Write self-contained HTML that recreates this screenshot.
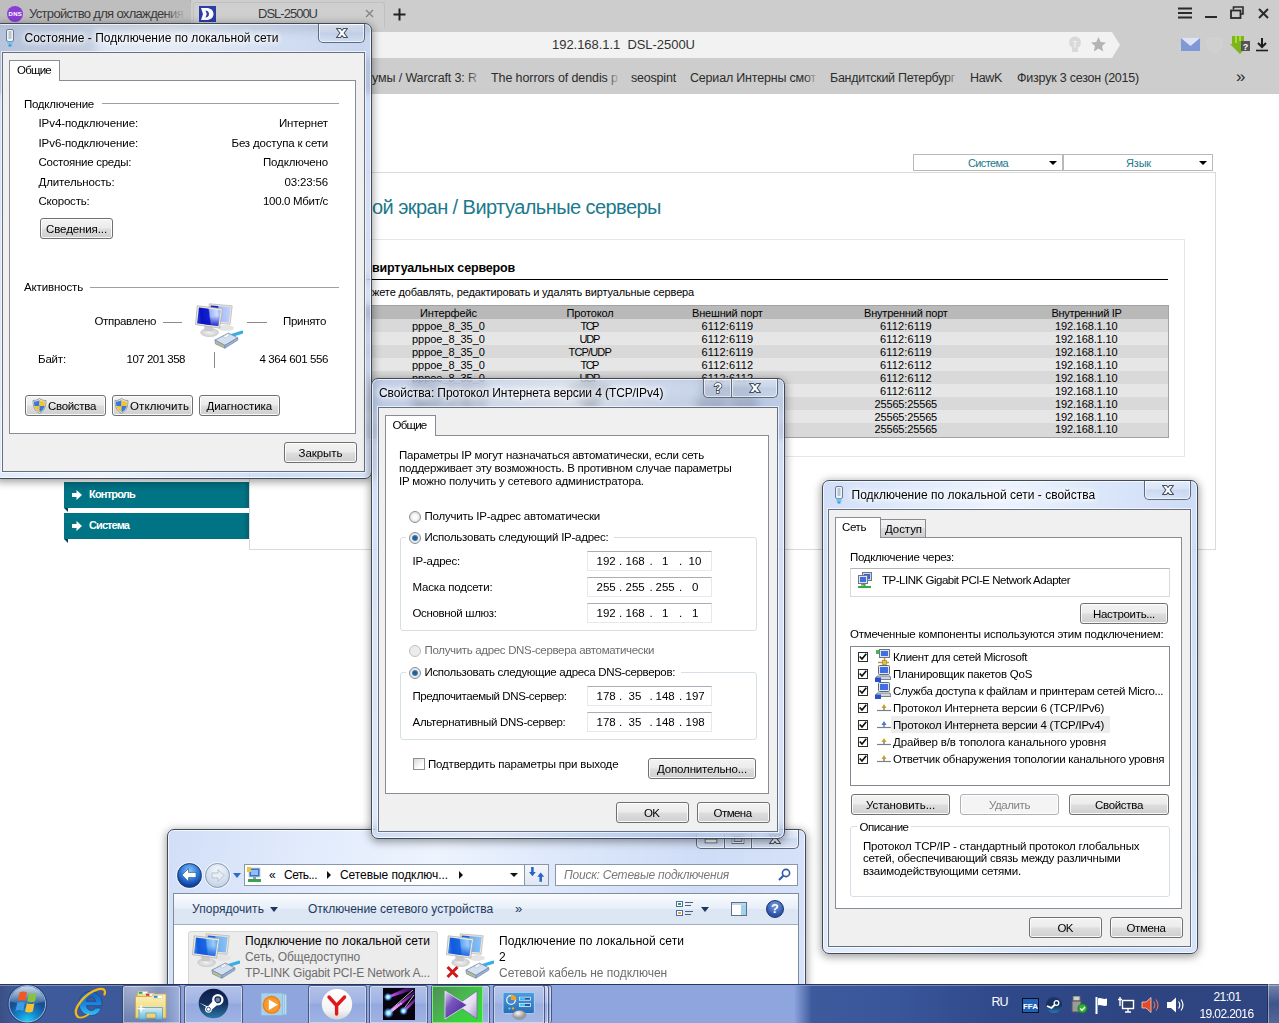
<!DOCTYPE html>
<html><head><meta charset="utf-8">
<style>
*{box-sizing:border-box;margin:0;padding:0}
html,body{width:1279px;height:1023px;overflow:hidden;background:#fff;font-family:"Liberation Sans",sans-serif;font-size:11.5px;color:#000}
.a{position:absolute}
.t{position:absolute;white-space:pre;font-size:11.5px;line-height:14px}
.s{position:absolute;white-space:pre;font-size:12px;line-height:15px}
/* browser */
#chrome{position:absolute;left:0;top:0;width:1279px;height:94px;background:#cdcdcd}
.bm{position:absolute;white-space:pre;font-size:12.5px;line-height:15px;color:#2c2c2c}
/* page */
.dd{position:absolute;top:154px;height:17px;border:1px solid #b9b9b9;background:#fff}
.dd i{position:absolute;right:5px;top:6px;border-left:4px solid transparent;border-right:4px solid transparent;border-top:4px solid #000}
.menu{position:absolute;left:64px;width:185px;height:26px;background:linear-gradient(90deg,#007385 0,#007385 97%,#04606f 100%)}
.menu:after{content:"";position:absolute;left:0;top:100%;border-top:4px solid #00424d;border-left:4px solid transparent}
.row{position:absolute;left:250px;width:918px;height:13px}
.c{position:absolute;white-space:pre;font-size:11px;line-height:13px}
/* win7 */
.win{position:absolute;border:1px solid #414b58;border-radius:7px;box-shadow:0 0 0 1px rgba(255,255,255,.7) inset,0 2px 8px 1px rgba(0,0,0,.38)}
.g1{background:linear-gradient(100deg,rgba(150,180,238,.44) 0%,rgba(180,204,246,.42) 18%,rgba(212,228,252,.42) 40%,rgba(172,198,244,.42) 60%,rgba(150,180,236,.46) 80%,rgba(165,192,242,.44) 100%);-webkit-backdrop-filter:blur(4px);backdrop-filter:blur(4px)}
.cl{position:absolute;background:#f0f0f0;border:1px solid #66717f;box-shadow:0 0 0 1px rgba(255,255,255,.65)}
.cap{position:absolute;height:19px;border:1px solid #5f6a7a;border-top:none;background:linear-gradient(rgba(255,255,255,.45),rgba(255,255,255,.15) 45%,rgba(190,204,226,.35) 50%,rgba(255,255,255,.12));box-shadow:0 0 0 1px rgba(255,255,255,.6) inset}
.cap svg{position:absolute;left:50%;top:9px;transform:translate(-50%,-50%)}
.panel{position:absolute;background:#fff;border:1px solid #898c95}
.tab{position:absolute;background:#fff;border:1px solid #898c95;border-bottom:none}
.tabi{position:absolute;background:linear-gradient(#f2f2f2,#ebebeb 50%,#dddddd 50%,#cfcfcf);border:1px solid #898c95;border-bottom:none}
.btn{position:absolute;border:1px solid #707070;border-radius:3px;background:linear-gradient(#f3f3f3,#ebebeb 48%,#dddddd 52%,#cfcfcf);box-shadow:0 0 0 1px rgba(255,255,255,.85) inset}
.btn.dis{border-color:#adb2b5;background:#f4f4f4}
.hr{position:absolute;height:1px;background:#a0a0a0}
.grp{position:absolute;border:1px solid #d5dfe5;border-radius:3px}
.ip{position:absolute;width:125px;height:20px;background:#fff;border:1px solid #e3e9ef;border-top-color:#abadb3}
.radio{position:absolute;width:12px;height:12px;border-radius:50%;border:1px solid #8e8f8f;background:radial-gradient(#fdfdfd 25%,#cfcfcf)}
.radio.on:after{content:"";position:absolute;left:2px;top:2px;width:6px;height:6px;border-radius:50%;background:radial-gradient(#2a5a8f 30%,#3e8fd0 75%,#9fd0f0)}
.radio.dis{border-color:#c0c0c0;background:#ececec}
.chk{position:absolute;width:13px;height:13px;border:1px solid #8e8f8f;background:linear-gradient(135deg,#d8d8d8,#fff 70%)}
.chk2{position:absolute;width:11px;height:11px;border:1px solid #2c2c2c;background:#fff}
/* taskbar */
#task{position:absolute;left:0;top:984px;width:1279px;height:39px;background:linear-gradient(90deg,#3b4f84 0%,#405b9b 1.2%,#3d5999 8%,#3b5697 13%,#3c5a9c 63.5%,#39569a 70%,#30498a 78%,#2d4480 90%,#2f4682 100%);border-top:1px solid #26345e;box-shadow:0 1px 0 rgba(255,255,255,.32) inset}
.tb{position:absolute;top:985px;height:38px;border:1px solid rgba(30,40,80,.65);border-bottom:none;border-radius:3px 3px 0 0;background:linear-gradient(rgba(255,255,255,.32),rgba(255,255,255,.16) 45%,rgba(255,255,255,.05) 50%,rgba(255,255,255,.16));box-shadow:0 0 0 1px rgba(255,255,255,.42) inset}
</style></head><body>
<!-- ===== BROWSER ===== -->
<div id="chrome"></div>
<div class="a" style="left:0;top:0;width:191px;height:27px;background:#bebebe;border-right:1px solid #acacac"></div>
<div class="a" style="left:193px;top:2px;width:192px;height:26px;background:#cfcfcf;border:1px solid #c0c0c0;border-bottom:none;border-radius:3px 3px 0 0"></div>
<div class="a" style="left:7px;top:6px;width:16px;height:16px;border-radius:50%;background:#8a3fd6"></div>
<div class="a" style="left:8.5px;top:11px;font-size:6px;line-height:6px;font-weight:bold;color:#fff;letter-spacing:.3px">DNS</div>
<div class="s" style="font-size: 13px; color: rgb(58, 58, 58); top: 6px; letter-spacing: -0.67px; left: 29px;">Устройство для охлаждения</div>
<div class="a" style="left:165px;top:2px;width:26px;height:24px;background:linear-gradient(90deg,rgba(190,190,190,0),#bebebe 80%)"></div>
<svg class="a" style="left:199px;top:6px" width="17" height="16" viewBox="0 0 17 16"><rect width="17" height="16" fill="#2b3ea8"></rect><path d="M2 2h5.5c4 0 7 2.3 7 6s-3 6-7 6H2l2-6z" fill="#fff"></path><path d="M6.5 4.5c2 0 3.5 1.3 3.5 3.5s-1.5 3.5-3.5 3.5L7.8 8z" fill="#2b3ea8"></path></svg>
<div class="s" style="font-size: 13px; color: rgb(58, 58, 58); top: 6px; letter-spacing: -0.99px; left: 258px;">DSL-2500U</div>
<svg class="a" style="left:365px;top:9px" width="9" height="9" viewBox="0 0 9 9"><path d="M1 1l7 7M8 1l-7 7" stroke="#858585" stroke-width="1.4"></path></svg>
<svg class="a" style="left:393px;top:8px" width="13" height="13" viewBox="0 0 13 13"><path d="M6.5 0.5v12M0.5 6.5h12" stroke="#222" stroke-width="2"></path></svg>
<!-- window controls -->
<svg class="a" style="left:1178px;top:7px" width="14" height="12" viewBox="0 0 14 12"><path d="M0 1.5h14M0 6h14M0 10.5h14" stroke="#2a2a2a" stroke-width="2"></path></svg>
<div class="a" style="left:1205px;top:16px;width:12px;height:2px;background:#2a2a2a"></div>
<svg class="a" style="left:1230px;top:6px" width="14" height="13" viewBox="0 0 14 13"><path d="M3.5 3.5V1h9.5v7H11" fill="none" stroke="#2a2a2a" stroke-width="1.6"></path><rect x="1" y="4.5" width="9.5" height="7.5" fill="none" stroke="#2a2a2a" stroke-width="1.8"></rect></svg>
<svg class="a" style="left:1258px;top:8px" width="11" height="11" viewBox="0 0 11 11"><path d="M1 1l9 9M10 1l-9 9" stroke="#2a2a2a" stroke-width="2"></path></svg>
<!-- address bar -->
<div class="a" style="left:96px;top:32px;width:1016px;height:26px;background:#f2f2f2"></div>
<div class="a" style="left:1112px;top:32px;width:0;height:0;border-top:13px solid transparent;border-bottom:13px solid transparent;border-left:8px solid #f2f2f2"></div>
<div class="s" style="font-size: 13px; color: rgb(51, 51, 51); top: 37px; letter-spacing: -0.04px; left: 552px;">192.168.1.1  DSL-2500U</div>
<svg class="a" style="left:1068px;top:36px" width="14" height="18" viewBox="0 0 14 18"><circle cx="7" cy="6.5" r="6" fill="#d9d9d9"></circle><rect x="4" y="12" width="6" height="4" fill="#d9d9d9"></rect><path d="M5 5.5h4M7 5.5v6" stroke="#f2f2f2" stroke-width="1.2"></path></svg>
<svg class="a" style="left:1091px;top:37px" width="15" height="15" viewBox="0 0 15 15"><path d="M7.5 0l2.2 5 5.3.5-4 3.6 1.2 5.4-4.7-2.9-4.7 2.9 1.2-5.4-4-3.6 5.3-.5z" fill="#b4b4b4"></path></svg>
<!-- right icons -->
<svg class="a" style="left:1181px;top:38px" width="19" height="13" viewBox="0 0 19 13"><rect width="19" height="13" fill="#8099d6"></rect><path d="M0 0l9.5 8L19 0z" fill="#dde4f6"></path></svg>
<svg class="a" style="left:1206px;top:37px" width="17" height="17" viewBox="0 0 17 17"><path d="M1 2c3 0 5-1 7.5-2C11 1 13 2 16 2c0 7-2 12-7.5 15C3 14 1 9 1 2z" fill="#d0d0d0" stroke="#d4d4d4"></path></svg>
<svg class="a" style="left:1229px;top:36px" width="22" height="19" viewBox="0 0 22 19"><path d="M3 0h12v8h5l-9 10-10-10h2z" fill="#7eb51a"></path><path d="M6 0h2v7H6zM10 0h2v5h-2z" fill="#a8dc3c"></path><rect x="12" y="5" width="9" height="10" fill="#555"></rect><text x="16.5" y="13.5" font-size="9" font-weight="bold" fill="#fff" text-anchor="middle" font-family="Liberation Sans">?</text></svg>
<svg class="a" style="left:1256px;top:38px" width="12" height="14" viewBox="0 0 12 14"><path d="M6 0v8M2 5l4 4 4-4" fill="none" stroke="#1d1d1d" stroke-width="2"></path><path d="M0 12.5h12" stroke="#1d1d1d" stroke-width="1.6"></path></svg>
<!-- bookmarks -->
<div class="bm" style="top: 71px; letter-spacing: -0.12px; left: 372px;">умы / Warcraft 3: R</div>
<div class="bm" style="top: 71px; letter-spacing: -0.1px; left: 491px;">The horrors of dendis p</div>
<div class="bm" style="top: 71px; letter-spacing: -0.2px; left: 631px;">seospint</div>
<div class="bm" style="top: 71px; letter-spacing: -0.19px; left: 690px;">Сериал Интерны смот</div>
<div class="bm" style="top: 71px; letter-spacing: -0.28px; left: 830px;">Бандитский Петербург</div>
<div class="bm" style="top: 71px; letter-spacing: -0.34px; left: 970px;">HawK</div>
<div class="bm" style="top: 71px; letter-spacing: -0.22px; left: 1017px;">Физрук 3 сезон (2015)</div>
<div class="a" style="left:467px;top:68px;width:12px;height:22px;background:linear-gradient(90deg,rgba(205,205,205,0),rgba(205,205,205,.8))"></div>
<div class="a" style="left:607px;top:68px;width:12px;height:22px;background:linear-gradient(90deg,rgba(205,205,205,0),rgba(205,205,205,.9))"></div>
<div class="a" style="left:805px;top:68px;width:12px;height:22px;background:linear-gradient(90deg,rgba(205,205,205,0),rgba(205,205,205,.9))"></div>
<div class="a" style="left:945px;top:68px;width:12px;height:22px;background:linear-gradient(90deg,rgba(205,205,205,0),rgba(205,205,205,.8))"></div>
<div class="bm" style="font-size: 17px; line-height: 18px; top: 68px; letter-spacing: -0.47px; left: 1236px;">»</div>

<!-- ===== PAGE ===== -->
<div class="a" style="left:249px;top:172px;width:967px;height:378px;border:1px solid #dadada"></div>
<div class="a" style="left:249px;top:239px;width:936px;height:218px;border:1px solid #e6e6e6"></div>
<div class="dd" style="left:913px;width:150px"><i></i></div>
<div class="dd" style="left:1063px;width:150px"><i></i></div>
<div class="c" style="color: rgb(27, 122, 141); top: 157px; letter-spacing: -0.62px; left: 968px;">Система</div>
<div class="c" style="color: rgb(27, 122, 141); top: 157px; letter-spacing: -0.18px; left: 1126px;">Язык</div>
<div class="a" style="white-space: pre; font-size: 20px; line-height: 24px; color: rgb(27, 122, 141); top: 195px; letter-spacing: -0.56px; left: 372px;">ой экран / Виртуальные серверы</div>
<div class="a" style="white-space: pre; font-size: 12.5px; line-height: 15px; font-weight: bold; top: 261px; letter-spacing: -0.16px; left: 372px;">виртуальных серверов</div>
<div class="a" style="left:250px;top:279px;width:918px;height:1px;background:#000"></div>
<div class="c" style="top: 286px; letter-spacing: -0.13px; left: 372px;">жете добавлять, редактировать и удалять виртуальные сервера</div>
<!-- table -->
<div class="a" style="left:250px;top:305px;width:919px;height:133px;border:1px solid #a3a3a3;background:#d9d9d9"></div>
<div class="row" style="top:306px;background:#b9b9b9"></div>
<div class="row" style="top:332px;background:#e6e6e6"></div>
<div class="row" style="top:358px;background:#e6e6e6"></div>
<div class="row" style="top:384px;background:#e6e6e6"></div>
<div class="row" style="top:410px;background:#e6e6e6"></div>
<div class="c" style="top: 307px; letter-spacing: -0.11px; left: 420px;">Интерфейс</div>
<div class="c" style="top: 307px; letter-spacing: -0.15px; left: 566.5px;">Протокол</div>
<div class="c" style="top: 307px; letter-spacing: -0.17px; left: 692px;">Внешний порт</div>
<div class="c" style="top: 307px; letter-spacing: -0.2px; left: 864px;">Внутренний порт</div>
<div class="c" style="top: 307px; letter-spacing: -0.31px; left: 1051.5px;">Внутренний IP</div>
<div class="c" style="top: 320px; letter-spacing: -0.05px; left: 412px;">pppoe_8_35_0</div>
<div class="c" style="top: 320px; letter-spacing: -1.53px; left: 580.5px;">TCP</div>
<div class="c" style="top: 320px; letter-spacing: 0.15px; left: 701.5px;">6112:6119</div>
<div class="c" style="top: 320px; letter-spacing: 0.15px; left: 880px;">6112:6119</div>
<div class="c" style="top: 320px; letter-spacing: -0.15px; left: 1055px;">192.168.1.10</div>
<div class="c" style="top: 333px; letter-spacing: -0.05px; left: 412px;">pppoe_8_35_0</div>
<div class="c" style="top: 333px; letter-spacing: -1.18px; left: 579.5px;">UDP</div>
<div class="c" style="top: 333px; letter-spacing: 0.15px; left: 701.5px;">6112:6119</div>
<div class="c" style="top: 333px; letter-spacing: 0.15px; left: 880px;">6112:6119</div>
<div class="c" style="top: 333px; letter-spacing: -0.15px; left: 1055px;">192.168.1.10</div>
<div class="c" style="top: 346px; letter-spacing: -0.05px; left: 412px;">pppoe_8_35_0</div>
<div class="c" style="top: 346px; letter-spacing: -0.84px; left: 568.5px;">TCP/UDP</div>
<div class="c" style="top: 346px; letter-spacing: 0.15px; left: 701.5px;">6112:6119</div>
<div class="c" style="top: 346px; letter-spacing: 0.15px; left: 880px;">6112:6119</div>
<div class="c" style="top: 346px; letter-spacing: -0.15px; left: 1055px;">192.168.1.10</div>
<div class="c" style="top: 359px; letter-spacing: -0.05px; left: 412px;">pppoe_8_35_0</div>
<div class="c" style="top: 359px; letter-spacing: -1.53px; left: 580.5px;">TCP</div>
<div class="c" style="top: 359px; letter-spacing: 0.15px; left: 701.5px;">6112:6112</div>
<div class="c" style="top: 359px; letter-spacing: 0.15px; left: 880px;">6112:6112</div>
<div class="c" style="top: 359px; letter-spacing: -0.15px; left: 1055px;">192.168.1.10</div>
<div class="c" style="top: 372px; letter-spacing: -0.05px; left: 412px;">pppoe_8_35_0</div>
<div class="c" style="top: 372px; letter-spacing: -1.18px; left: 579.5px;">UDP</div>
<div class="c" style="top: 372px; letter-spacing: 0.15px; left: 701.5px;">6112:6112</div>
<div class="c" style="top: 372px; letter-spacing: 0.15px; left: 880px;">6112:6112</div>
<div class="c" style="top: 372px; letter-spacing: -0.15px; left: 1055px;">192.168.1.10</div>
<div class="c" style="top: 385px; letter-spacing: -0.05px; left: 412px;">pppoe_8_35_0</div>
<div class="c" style="top: 385px; letter-spacing: -0.84px; left: 568.5px;">TCP/UDP</div>
<div class="c" style="top: 385px; letter-spacing: 0.15px; left: 701.5px;">6112:6112</div>
<div class="c" style="top: 385px; letter-spacing: 0.15px; left: 880px;">6112:6112</div>
<div class="c" style="top: 385px; letter-spacing: -0.15px; left: 1055px;">192.168.1.10</div>
<div class="c" style="top: 398px; letter-spacing: -0.05px; left: 412px;">pppoe_8_35_0</div>
<div class="c" style="top: 398px; letter-spacing: -1.53px; left: 580.5px;">TCP</div>
<div class="c" style="top: 398px; letter-spacing: -0.15px; left: 696px;">25565:25565</div>
<div class="c" style="top: 398px; letter-spacing: -0.15px; left: 874.5px;">25565:25565</div>
<div class="c" style="top: 398px; letter-spacing: -0.15px; left: 1055px;">192.168.1.10</div>
<div class="c" style="top: 411px; letter-spacing: -0.05px; left: 412px;">pppoe_8_35_0</div>
<div class="c" style="top: 411px; letter-spacing: -1.18px; left: 579.5px;">UDP</div>
<div class="c" style="top: 411px; letter-spacing: -0.15px; left: 696px;">25565:25565</div>
<div class="c" style="top: 411px; letter-spacing: -0.15px; left: 874.5px;">25565:25565</div>
<div class="c" style="top: 411px; letter-spacing: -0.15px; left: 1055px;">192.168.1.10</div>
<div class="c" style="top: 423px; letter-spacing: -0.05px; left: 412px;">pppoe_8_35_0</div>
<div class="c" style="top: 423px; letter-spacing: -0.84px; left: 568.5px;">TCP/UDP</div>
<div class="c" style="top: 423px; letter-spacing: -0.15px; left: 696px;">25565:25565</div>
<div class="c" style="top: 423px; letter-spacing: -0.15px; left: 874.5px;">25565:25565</div>
<div class="c" style="top: 423px; letter-spacing: -0.15px; left: 1055px;">192.168.1.10</div>

<!-- menu -->
<div class="menu" style="top:482px;height:26px"></div>
<div class="menu" style="top:513px"></div>
<svg class="a" style="left:72px;top:490px" width="10" height="10" viewBox="0 0 10 10"><path d="M0 3h4.5V0L10 5 4.5 10V7H0z" fill="#fff"></path></svg>
<svg class="a" style="left:72px;top:521px" width="10" height="10" viewBox="0 0 10 10"><path d="M0 3h4.5V0L10 5 4.5 10V7H0z" fill="#fff"></path></svg>
<div class="c" style="color: rgb(255, 255, 255); font-weight: bold; top: 488px; letter-spacing: -0.8px; left: 89px;">Контроль</div>
<div class="c" style="color: rgb(255, 255, 255); font-weight: bold; top: 519px; letter-spacing: -0.9px; left: 89px;">Система</div>
<!-- ===== WIN4 explorer (behind) ===== -->
<div class="win g1" style="left:167px;top:829px;width:639px;height:220px"></div>
<div class="cap" style="left:696px;top:830px;width:29px;border-radius:0 0 0 5px;height:19px"><svg style="top:11px" width="13" height="5" viewBox="0 0 13 5"><rect x=".5" y=".5" width="12" height="4" fill="#f9fbfe" stroke="#46505f"></rect></svg></div>
<div class="cap" style="left:724px;top:830px;width:28px;height:19px"><svg style="top:9px" width="13" height="10" viewBox="0 0 13 10"><rect x="1.500" y="1.500" width="10" height="7" fill="none" stroke="#46505f" stroke-width="3"></rect><rect x="1.500" y="1.500" width="10" height="7" fill="none" stroke="#f9fbfe" stroke-width="1.400"></rect></svg></div>
<div class="cap" style="left:751px;top:830px;width:48px;border-radius:0 0 5px 0;height:19px"><svg width="13" height="11" viewBox="0 0 13 11"><path d="M1 1h4L6.500 3 8 1h4L8.600 5.500 12 10H8L6.500 8 5 10H1l3.400-4.500z" fill="#f9fbfe" stroke="#46505f" stroke-width="1.100" stroke-linejoin="round"></path></svg></div>
<!-- nav buttons -->
<div class="a" style="left:177px;top:863px;width:25px;height:25px;border-radius:50%;background:radial-gradient(circle at 50% 30%,#8fc4f4 0,#2d79d6 45%,#0f3f9e 75%,#1c55b8 100%);border:1px solid #1a3a78;box-shadow:0 0 0 1px rgba(255,255,255,.6)"></div>
<svg class="a" style="left:181px;top:868px" width="16" height="14" viewBox="0 0 16 14"><path d="M7.5 0.5L1 7l6.5 6.5v-4H15v-5H7.5z" fill="#fff" stroke="#24508f" stroke-width=".6"></path></svg>
<div class="a" style="left:205px;top:863px;width:25px;height:25px;border-radius:50%;background:radial-gradient(circle at 50% 30%,#f4f8fc 0,#d4dfee 55%,#b9c8de 100%);border:1px solid #8a99b3;box-shadow:0 0 0 1px rgba(255,255,255,.6)"></div>
<svg class="a" style="left:211px;top:869px" width="14" height="13" viewBox="0 0 14 13"><path d="M7 0.5L13 6.5 7 12.5V9H1V4h6z" fill="#e9eef6" stroke="#a9b6cb" stroke-width=".8"></path></svg>
<div class="a" style="left:233px;top:873px;border-left:4px solid transparent;border-right:4px solid transparent;border-top:5px solid #2e6ccc"></div>
<!-- address -->
<div class="a" style="left:244px;top:864px;width:281px;height:22px;background:#fff;border:1px solid #8a97a8"></div>
<div class="a" style="left:524px;top:864px;width:25px;height:22px;background:linear-gradient(#f4f7fb,#dfe7f2);border:1px solid #8a97a8"></div>
<svg class="a" style="left:247px;top:867px" width="16" height="16" viewBox="0 0 16 16"><rect x="2" y="1" width="11" height="9" fill="#3b6fd0" stroke="#c9d3e0"></rect><rect x="4" y="3" width="7" height="5" fill="#8ec0f5"></rect><rect x="6" y="10" width="3" height="2" fill="#999"></rect><rect x="1" y="12" width="13" height="3" fill="#3aa44a"></rect><rect x="0" y="0" width="4" height="5" fill="#e8c93a"></rect></svg>
<div class="s" style="font-size: 12px; top: 868px; letter-spacing: 4.31px; left: 269px;">«</div>
<div class="s" style="top: 868px; letter-spacing: -0.53px; left: 284px;">Сеть...</div>
<div class="a" style="left:327px;top:871px;border-top:4px solid transparent;border-bottom:4px solid transparent;border-left:4px solid #111"></div>
<div class="s" style="top: 868px; letter-spacing: -0.07px; left: 340px;">Сетевые подключ...</div>
<div class="a" style="left:459px;top:871px;border-top:4px solid transparent;border-bottom:4px solid transparent;border-left:4px solid #111"></div>
<div class="a" style="left:510px;top:873px;border-left:4px solid transparent;border-right:4px solid transparent;border-top:4px solid #111"></div>
<svg class="a" style="left:529px;top:867px" width="15" height="16" viewBox="0 0 15 16"><path d="M5.500 1v6H8L4 12 0 7h2.500V1z" fill="#2a62c8" transform="translate(0 -1) scale(.85)"></path><path d="M10.500 15V9H8l4-5 4 5h-2.500v6z" fill="#2a62c8" transform="translate(1.500 2) scale(.85)"></path></svg>
<!-- search -->
<div class="a" style="left:555px;top:864px;width:243px;height:22px;background:#fff;border:1px solid #8a97a8"></div>
<div class="s" style="font-style: italic; color: rgb(122, 122, 122); top: 868px; letter-spacing: -0.22px; left: 564px;">Поиск: Сетевые подключения</div>
<svg class="a" style="left:778px;top:868px" width="13" height="13" viewBox="0 0 13 13"><circle cx="8" cy="5" r="3.6" fill="none" stroke="#2b5aa8" stroke-width="1.6"></circle><path d="M5.3 7.7L1 12" stroke="#2b5aa8" stroke-width="2"></path></svg>
<!-- toolbar -->
<div class="a" style="left:173px;top:893px;width:626px;height:160px;background:#fff;border:1px solid #7f8c9c"></div>
<div class="a" style="left:174px;top:894px;width:624px;height:31px;background:linear-gradient(#fafcfe,#e6eef8 50%,#dce6f4 50%,#dde7f4);border-bottom:1px solid #a0afc3"></div>
<div class="s" style="color: rgb(30, 57, 91); top: 902px; letter-spacing: 0.05px; left: 192px;">Упорядочить</div>
<div class="a" style="left:270px;top:907px;border-left:4px solid transparent;border-right:4px solid transparent;border-top:5px solid #1e395b"></div>
<div class="s" style="color: rgb(30, 57, 91); top: 902px; letter-spacing: -0.01px; left: 308px;">Отключение сетевого устройства</div>
<div class="s" style="color: rgb(30, 57, 91); font-size: 13px; top: 901px; letter-spacing: 0.77px; left: 515px;">»</div>
<svg class="a" style="left:676px;top:901px" width="17" height="16" viewBox="0 0 17 16"><rect x="0.5" y="0.5" width="6" height="5" fill="#fff" stroke="#4a6ea0"></rect><rect x="0.5" y="9.5" width="6" height="5" fill="#fff" stroke="#4a6ea0"></rect><rect x="2" y="2" width="3" height="2" fill="#3aa44a"></rect><rect x="2" y="11" width="3" height="2" fill="#e8a03a"></rect><path d="M9 1.5h8M9 4.5h6M9 10.5h8M9 13.5h6" stroke="#4a6080" stroke-width="1.2"></path></svg>
<div class="a" style="left:701px;top:907px;border-left:4px solid transparent;border-right:4px solid transparent;border-top:5px solid #1e395b"></div>
<svg class="a" style="left:731px;top:901px" width="16" height="16" viewBox="0 0 16 16"><rect x="0.5" y="1.5" width="15" height="13" fill="#fff" stroke="#5a7190"></rect><rect x="10" y="3" width="5" height="11" fill="#9fd3ea"></rect><rect x="1" y="2" width="14" height="2" fill="#c5d3e4"></rect></svg>
<div class="a" style="left:766px;top:900px;width:18px;height:18px;border-radius:50%;background:radial-gradient(circle at 50% 30%,#7ea3e0,#2a4fa8 70%);border:1px solid #1c3370"></div>
<div class="a" style="left:771px;top:902px;font-size:13px;font-weight:bold;color:#fff;line-height:14px">?</div>
<!-- items -->
<div class="a" style="left:188px;top:931px;width:250px;height:56px;background:#ececec;border:1px solid #d6d6d6;border-radius:3px"></div>
<svg class="a" style="left:192px;top:933px" width="48" height="46" viewBox="0 0 48 46">
<defs><linearGradient id="sc192_933" x1="0" y1=".1" x2="1" y2="0"><stop offset="0" stop-color="#2f7fec"></stop><stop offset=".12" stop-color="#1258dc"></stop><stop offset=".46" stop-color="#1c68e4"></stop><stop offset=".52" stop-color="#5fa6f2"></stop><stop offset=".8" stop-color="#9cccfa"></stop><stop offset="1" stop-color="#4f98ee"></stop></linearGradient>
<linearGradient id="sb192_933" x1="0" y1=".1" x2="1" y2="0"><stop offset="0" stop-color="#1258dc"></stop><stop offset=".38" stop-color="#1f6ae4"></stop><stop offset=".44" stop-color="#6cb0f4"></stop><stop offset="1" stop-color="#8cc4f8"></stop></linearGradient>
<linearGradient id="sd192_933" x1="0" y1="0" x2=".15" y2="1"><stop offset=".55" stop-color="#1258dc" stop-opacity="0"></stop><stop offset="1" stop-color="#1258dc" stop-opacity=".75"></stop></linearGradient><radialGradient id="st192_933"><stop offset="0" stop-color="#f2f2f2"></stop><stop offset="1" stop-color="#cfcfcf"></stop></radialGradient></defs>
<ellipse cx="31" cy="25" rx="8" ry="3" fill="#e4e4e4"></ellipse>
<path d="M14.300 .8l22.900 2-2.100 18.500-22.100-1.800z" fill="#e9e7df" stroke="#b4b2a8" stroke-width=".7"></path>
<path d="M15.800 2.400l19.800 1.700-1.800 15.500-19.200-1.600z" fill="url(#sb192_933)"></path>
<ellipse cx="14.600" cy="29.500" rx="9" ry="4.200" fill="url(#st192_933)" stroke="#c4c4c4" stroke-width=".5"></ellipse>
<path d="M9.500 23l8 1 .3 4.500-8.800-.8z" fill="#c9c9c9"></path>
<path d="M2.300 2.800l25.200 3-2.900 19.300L.5 21.600z" fill="#ecebe4" stroke="#a9a79d" stroke-width=".7"></path>
<path d="M3.900 4.600l21.900 2.600-2.500 16L2.200 20.200z" fill="url(#sc192_933)"></path><path d="M3.900 4.600l21.900 2.600-2.500 16L2.200 20.200z" fill="url(#sd192_933)"></path>
<path d="M36.500 32.600l10.400-3.400" stroke="#36aee8" stroke-width="3.200" stroke-linecap="round"></path>
<path d="M19.900 37.100l13.500-7 9.400 4.700-12.900 7.600z" fill="#d3e0f0" stroke="#6f86a6" stroke-width=".8"></path>
<path d="M19.900 37.100l10 5.300v2.800l-9.400-4.300z" fill="#a9bdd8" stroke="#6f86a6" stroke-width=".7"></path>
<path d="M29.900 42.400l12.900-7.600v2.300l-12.900 8.100z" fill="#9ab2d2" stroke="#6f86a6" stroke-width=".7"></path>
<path d="M28 33.800l4.500-3 2.500 1.300-4.500 3z" fill="#f4f8fc" stroke="#9fb2cc" stroke-width=".5"></path>
<path d="M22.300 39.300v2M24 40.200v2M25.700 41.100v2M27.400 42v2" stroke="#d8b82a" stroke-width="1"></path>
</svg>
<div class="s" style="top: 934px; letter-spacing: 0.07px; left: 245px;">Подключение по локальной сети</div>
<div class="s" style="color: rgb(109, 109, 109); top: 950px; letter-spacing: -0.1px; left: 245px;">Сеть, Общедоступно</div>
<div class="s" style="color: rgb(109, 109, 109); top: 966px; letter-spacing: -0.17px; left: 245px;">TP-LINK Gigabit PCI-E Network A...</div>
<svg class="a" style="left:446px;top:933px" width="48" height="46" viewBox="0 0 48 46">
<defs><linearGradient id="sc446_933" x1="0" y1=".1" x2="1" y2="0"><stop offset="0" stop-color="#2f7fec"></stop><stop offset=".12" stop-color="#1258dc"></stop><stop offset=".46" stop-color="#1c68e4"></stop><stop offset=".52" stop-color="#5fa6f2"></stop><stop offset=".8" stop-color="#9cccfa"></stop><stop offset="1" stop-color="#4f98ee"></stop></linearGradient>
<linearGradient id="sb446_933" x1="0" y1=".1" x2="1" y2="0"><stop offset="0" stop-color="#1258dc"></stop><stop offset=".38" stop-color="#1f6ae4"></stop><stop offset=".44" stop-color="#6cb0f4"></stop><stop offset="1" stop-color="#8cc4f8"></stop></linearGradient>
<linearGradient id="sd446_933" x1="0" y1="0" x2=".15" y2="1"><stop offset=".55" stop-color="#1258dc" stop-opacity="0"></stop><stop offset="1" stop-color="#1258dc" stop-opacity=".75"></stop></linearGradient><radialGradient id="st446_933"><stop offset="0" stop-color="#f2f2f2"></stop><stop offset="1" stop-color="#cfcfcf"></stop></radialGradient></defs>
<ellipse cx="31" cy="25" rx="8" ry="3" fill="#e4e4e4"></ellipse>
<path d="M14.300 .8l22.900 2-2.100 18.500-22.100-1.800z" fill="#e9e7df" stroke="#b4b2a8" stroke-width=".7"></path>
<path d="M15.800 2.400l19.800 1.700-1.800 15.500-19.200-1.600z" fill="url(#sb446_933)"></path>
<ellipse cx="14.600" cy="29.500" rx="9" ry="4.200" fill="url(#st446_933)" stroke="#c4c4c4" stroke-width=".5"></ellipse>
<path d="M9.500 23l8 1 .3 4.500-8.800-.8z" fill="#c9c9c9"></path>
<path d="M2.300 2.800l25.200 3-2.900 19.300L.5 21.600z" fill="#ecebe4" stroke="#a9a79d" stroke-width=".7"></path>
<path d="M3.900 4.600l21.900 2.600-2.500 16L2.200 20.200z" fill="url(#sc446_933)"></path><path d="M3.900 4.600l21.900 2.600-2.500 16L2.200 20.200z" fill="url(#sd446_933)"></path>
<path d="M36.500 32.600l10.400-3.400" stroke="#36aee8" stroke-width="3.200" stroke-linecap="round"></path>
<path d="M19.900 37.100l13.500-7 9.400 4.700-12.900 7.600z" fill="#d3e0f0" stroke="#6f86a6" stroke-width=".8"></path>
<path d="M19.900 37.100l10 5.300v2.800l-9.400-4.300z" fill="#a9bdd8" stroke="#6f86a6" stroke-width=".7"></path>
<path d="M29.900 42.400l12.900-7.600v2.300l-12.900 8.100z" fill="#9ab2d2" stroke="#6f86a6" stroke-width=".7"></path>
<path d="M28 33.800l4.500-3 2.500 1.300-4.500 3z" fill="#f4f8fc" stroke="#9fb2cc" stroke-width=".5"></path>
<path d="M22.300 39.300v2M24 40.200v2M25.700 41.100v2M27.400 42v2" stroke="#d8b82a" stroke-width="1"></path>
</svg>
<svg class="a" style="left:446px;top:965px" width="13" height="14" viewBox="0 0 13 14"><path d="M1.5 2l10 10M11.5 2l-10 10" stroke="#d21919" stroke-width="3"></path></svg>
<div class="s" style="top: 934px; letter-spacing: 0.07px; left: 499px;">Подключение по локальной сети</div>
<div class="s" style="top: 950px; letter-spacing: -0.69px; left: 499px;">2</div>
<div class="s" style="color: rgb(109, 109, 109); top: 966px; letter-spacing: -0.03px; left: 499px;">Сетевой кабель не подключен</div>
<!-- ===== WIN1 status ===== -->
<div class="win g1" style="left:-6px;top:23px;width:378px;height:456px"></div>
<div class="cap" style="left:318px;top:24px;width:47px;border-radius:0 0 5px 5px;height:19px"><svg width="13" height="11" viewBox="0 0 13 11"><path d="M1 1h4L6.500 3 8 1h4L8.600 5.500 12 10H8L6.500 8 5 10H1l3.400-4.500z" fill="#f9fbfe" stroke="#46505f" stroke-width="1.100" stroke-linejoin="round"></path></svg></div>
<svg class="a" style="left:5px;top:29px" width="10" height="18" viewBox="0 0 10 18"><rect x="1.500" y=".5" width="7" height="12" rx="1.500" fill="#eef3f8" stroke="#6d7a8c"></rect><rect x="3.500" y="2" width="3" height="8" fill="#b9c6d6"></rect><rect x="2.500" y="12.500" width="5" height="3" fill="#6ec3f0"></rect><rect x="3.500" y="15.500" width="3" height="2" fill="#3a96d6"></rect></svg>
<div class="s" style="text-shadow: rgb(255, 255, 255) 0px 0px 7px, rgb(255, 255, 255) 0px 0px 7px, rgb(255, 255, 255) 0px 0px 4px; top: 31px; letter-spacing: 0.01px; left: 24.5px;">Состояние - Подключение по локальной сети</div>
<div class="cl" style="left:2px;top:52px;width:363px;height:420px"></div>
<div class="panel" style="left:9px;top:80px;width:347px;height:354px"></div>
<div class="tab" style="left:9px;top:60px;width:51px;height:21px"></div>
<div class="t" style="top: 63px; letter-spacing: -0.77px; left: 17px;">Общие</div>
<div class="t" style="top: 97px; letter-spacing: -0.27px; left: 24px;">Подключение</div>
<div class="hr" style="left:102px;top:103px;width:237px"></div>
<div class="t" style="top: 116px; letter-spacing: -0.08px; left: 38.5px;">IPv4-подключение:</div>
<div class="t" style="top: 136px; letter-spacing: -0.08px; left: 38.5px;">IPv6-подключение:</div>
<div class="t" style="top: 155px; letter-spacing: -0.28px; left: 38.5px;">Состояние среды:</div>
<div class="t" style="top: 175px; letter-spacing: -0.13px; left: 38.5px;">Длительность:</div>
<div class="t" style="top: 194px; letter-spacing: -0.21px; left: 38.5px;">Скорость:</div>
<div class="t" style="top: 116px; letter-spacing: -0.15px; left: 279px;">Интернет</div>
<div class="t" style="top: 136px; letter-spacing: -0.17px; left: 231.5px;">Без доступа к сети</div>
<div class="t" style="top: 155px; letter-spacing: -0.15px; left: 263px;">Подключено</div>
<div class="t" style="top: 175px; letter-spacing: -0.16px; left: 284.5px;">03:23:56</div>
<div class="t" style="top: 194px; letter-spacing: -0.32px; left: 263px;">100.0 Мбит/с</div>
<div class="btn" style="left:40px;top:218px;width:73px;height:21px"></div>
<div class="t" style="top: 222px; letter-spacing: -0.1px; left: 46px;">Сведения...</div>
<div class="t" style="top: 280px; letter-spacing: -0.14px; left: 24px;">Активность</div>
<div class="hr" style="left:90px;top:287px;width:249px"></div>
<div class="t" style="top: 314px; letter-spacing: -0.34px; left: 94.5px;">Отправлено</div>
<div class="hr" style="left:163px;top:322px;width:19px;background:#8c8c8c"></div>
<div class="hr" style="left:247px;top:322px;width:20px;background:#8c8c8c"></div>
<div class="t" style="top: 314px; letter-spacing: -0.31px; left: 283px;">Принято</div>
<svg class="a" style="left:195px;top:303px" width="48" height="46" viewBox="0 0 48 46">
<defs><linearGradient id="sc195_303" x1="0" y1=".1" x2="1" y2="0"><stop offset="0" stop-color="#2a38d8"></stop><stop offset=".12" stop-color="#0a12c4"></stop><stop offset=".46" stop-color="#1220cc"></stop><stop offset=".52" stop-color="#9db4f6"></stop><stop offset=".8" stop-color="#cfdcfc"></stop><stop offset="1" stop-color="#8fa8f2"></stop></linearGradient>
<linearGradient id="sb195_303" x1="0" y1=".1" x2="1" y2="0"><stop offset="0" stop-color="#0a12c4"></stop><stop offset=".38" stop-color="#1624d0"></stop><stop offset=".44" stop-color="#a9bcf8"></stop><stop offset="1" stop-color="#c4d2fb"></stop></linearGradient>
<linearGradient id="sd195_303" x1="0" y1="0" x2=".15" y2="1"><stop offset=".55" stop-color="#0a12c4" stop-opacity="0"></stop><stop offset="1" stop-color="#0a12c4" stop-opacity=".75"></stop></linearGradient><radialGradient id="st195_303"><stop offset="0" stop-color="#f2f2f2"></stop><stop offset="1" stop-color="#cfcfcf"></stop></radialGradient></defs>
<ellipse cx="31" cy="25" rx="8" ry="3" fill="#e4e4e4"></ellipse>
<path d="M14.300 .8l22.900 2-2.100 18.500-22.100-1.800z" fill="#e9e7df" stroke="#b4b2a8" stroke-width=".7"></path>
<path d="M15.800 2.400l19.800 1.700-1.800 15.500-19.200-1.600z" fill="url(#sb195_303)"></path>
<ellipse cx="14.600" cy="29.500" rx="9" ry="4.200" fill="url(#st195_303)" stroke="#c4c4c4" stroke-width=".5"></ellipse>
<path d="M9.500 23l8 1 .3 4.500-8.800-.8z" fill="#c9c9c9"></path>
<path d="M2.300 2.800l25.200 3-2.900 19.300L.5 21.600z" fill="#ecebe4" stroke="#a9a79d" stroke-width=".7"></path>
<path d="M3.900 4.600l21.900 2.600-2.500 16L2.200 20.200z" fill="url(#sc195_303)"></path><path d="M3.900 4.600l21.900 2.600-2.500 16L2.200 20.200z" fill="url(#sd195_303)"></path>
<path d="M36.500 32.600l10.400-3.400" stroke="#36aee8" stroke-width="3.200" stroke-linecap="round"></path>
<path d="M19.900 37.100l13.500-7 9.400 4.700-12.900 7.600z" fill="#d3e0f0" stroke="#6f86a6" stroke-width=".8"></path>
<path d="M19.900 37.100l10 5.300v2.800l-9.400-4.300z" fill="#a9bdd8" stroke="#6f86a6" stroke-width=".7"></path>
<path d="M29.900 42.400l12.900-7.600v2.300l-12.900 8.100z" fill="#9ab2d2" stroke="#6f86a6" stroke-width=".7"></path>
<path d="M28 33.800l4.500-3 2.500 1.300-4.500 3z" fill="#f4f8fc" stroke="#9fb2cc" stroke-width=".5"></path>
<path d="M22.300 39.300v2M24 40.200v2M25.700 41.100v2M27.400 42v2" stroke="#d8b82a" stroke-width="1"></path>
</svg>
<div class="t" style="top: 352px; letter-spacing: -0.17px; left: 38px;">Байт:</div>
<div class="t" style="top: 352px; letter-spacing: -0.5px; left: 126.5px;">107 201 358</div>
<div class="a" style="left:214px;top:352px;width:1px;height:16px;background:#8c8c8c"></div>
<div class="t" style="top: 352px; letter-spacing: -0.39px; left: 259.5px;">4 364 601 556</div>
<div class="btn" style="left:25px;top:395px;width:81px;height:21px"></div>
<div class="btn" style="left:112px;top:395px;width:81px;height:21px"></div>
<div class="btn" style="left:199px;top:395px;width:81px;height:21px"></div>
<svg class="a" style="left:32px;top:398px" width="15" height="16" viewBox="0 0 15 16"><path d="M7.500 .5c2 1.500 4 2 6.500 2 0 6-1.500 10-6.500 13C2.500 12.500 1 8.500 1 2.500c2.500 0 4.500-.5 6.500-2z" fill="#e9ecf1" stroke="#7d8894" stroke-width=".8"></path><path d="M7.500 2v6H2.300C2 6.500 2 5 2 3.500c2 0 3.800-.5 5.500-1.500z" fill="#3a78d8"></path><path d="M7.500 2c1.700 1 3.500 1.500 5.500 1.500 0 1.500 0 3-.3 4.500H7.500z" fill="#f2c530"></path><path d="M2.300 8h5.200v6.300C4.500 12.500 3 10.500 2.300 8z" fill="#f2c530"></path><path d="M7.500 8h5.200c-.7 2.500-2.200 4.500-5.200 6.300z" fill="#3a78d8"></path></svg>
<svg class="a" style="left:114px;top:398px" width="15" height="16" viewBox="0 0 15 16"><path d="M7.500 .5c2 1.500 4 2 6.500 2 0 6-1.500 10-6.500 13C2.500 12.500 1 8.500 1 2.500c2.500 0 4.500-.5 6.500-2z" fill="#e9ecf1" stroke="#7d8894" stroke-width=".8"></path><path d="M7.500 2v6H2.300C2 6.500 2 5 2 3.500c2 0 3.800-.5 5.500-1.500z" fill="#3a78d8"></path><path d="M7.500 2c1.700 1 3.500 1.500 5.500 1.500 0 1.500 0 3-.3 4.500H7.500z" fill="#f2c530"></path><path d="M2.300 8h5.200v6.300C4.500 12.500 3 10.500 2.300 8z" fill="#f2c530"></path><path d="M7.500 8h5.200c-.7 2.500-2.200 4.500-5.200 6.300z" fill="#3a78d8"></path></svg>
<div class="t" style="top: 399px; letter-spacing: -0.31px; left: 48px;">Свойства</div>
<div class="t" style="top: 399px; letter-spacing: 0.1px; left: 130px;">Отключить</div>
<div class="t" style="top: 399px; letter-spacing: -0.11px; left: 206.5px;">Диагностика</div>
<div class="btn" style="left:284px;top:442px;width:73px;height:21px"></div>
<div class="t" style="top: 446px; letter-spacing: -0.04px; left: 298.5px;">Закрыть</div>
<!-- ===== WIN3 lan props ===== -->
<div class="win g1" style="left:822px;top:480px;width:376px;height:474px"></div>
<div class="cap" style="left:1144px;top:481px;width:47px;border-radius:0 0 5px 5px;height:19px"><svg width="13" height="11" viewBox="0 0 13 11"><path d="M1 1h4L6.500 3 8 1h4L8.600 5.500 12 10H8L6.500 8 5 10H1l3.400-4.500z" fill="#f9fbfe" stroke="#46505f" stroke-width="1.100" stroke-linejoin="round"></path></svg></div>
<svg class="a" style="left:834px;top:486px" width="10" height="18" viewBox="0 0 10 18"><rect x="1.500" y=".5" width="7" height="12" rx="1.500" fill="#eef3f8" stroke="#6d7a8c"></rect><rect x="3.500" y="2" width="3" height="8" fill="#b9c6d6"></rect><rect x="2.500" y="12.500" width="5" height="3" fill="#6ec3f0"></rect><rect x="3.500" y="15.500" width="3" height="2" fill="#3a96d6"></rect></svg>
<div class="s" style="text-shadow: rgb(255, 255, 255) 0px 0px 7px, rgb(255, 255, 255) 0px 0px 7px, rgb(255, 255, 255) 0px 0px 4px; top: 488px; letter-spacing: 0px; left: 851.5px;">Подключение по локальной сети - свойства</div>
<div class="cl" style="left:828px;top:509px;width:363px;height:438px"></div>
<div class="panel" style="left:835px;top:537px;width:347px;height:372px"></div>
<div class="tabi" style="left:880px;top:519px;width:46px;height:18px"></div>
<div class="tab" style="left:835px;top:517px;width:46px;height:21px"></div>
<div class="t" style="top: 520px; letter-spacing: -0.39px; left: 842px;">Сеть</div>
<div class="t" style="top: 522px; letter-spacing: -0.07px; left: 885px;">Доступ</div>
<div class="t" style="top: 550px; letter-spacing: -0.31px; left: 850px;">Подключение через:</div>
<div class="a" style="left:850px;top:568px;width:320px;height:29px;background:#fff;border:1px solid #d9d9d9;border-top-color:#b5b5b5"></div>
<svg class="a" style="left:857px;top:572px" width="16" height="16" viewBox="0 0 16 16"><rect x="5.500" y=".5" width="9" height="8" fill="#cfd6e0" stroke="#6b7686"></rect><rect x="7" y="2" width="6" height="5" fill="#3b62d8"></rect><rect x="1.500" y="3.500" width="9" height="8" fill="#dfe4ec" stroke="#6b7686"></rect><rect x="3" y="5" width="6" height="5" fill="#3f6ee6"></rect><rect x="4" y="12" width="4" height="1.500" fill="#888"></rect><rect x="1" y="14" width="13" height="2" fill="#36a84a"></rect><rect x="6.500" y="12" width="2" height="3" fill="#36a84a"></rect></svg>
<div class="t" style="top: 573px; letter-spacing: -0.48px; left: 882px;">TP-LINK Gigabit PCI-E Network Adapter</div>
<div class="btn" style="left:1080px;top:603px;width:88px;height:21px"></div>
<div class="t" style="top: 607px; letter-spacing: -0.32px; left: 1093px;">Настроить...</div>
<div class="t" style="top: 627px; letter-spacing: -0.24px; left: 850px;">Отмеченные компоненты используются этим подключением:</div>
<div class="a" style="left:850px;top:646px;width:320px;height:140px;background:#fff;border:1px solid #828790"></div>
<div class="a" style="left:891px;top:716px;width:219px;height:17px;background:#ededed"></div>
<div class="chk2" style="left:858px;top:652px;width:10px;height:10px"></div><svg class="a" style="left:859px;top:653px" width="8" height="8" viewBox="0 0 8 8"><path d="M.7 3.500l2.300 2.500L7.300 .8" fill="none" stroke="#111" stroke-width="1.700"></path></svg><svg class="a" style="left:875px;top:649px" width="16" height="16" viewBox="0 0 16 16"><rect x="4.500" y=".5" width="10" height="8" fill="#dfe4ec" stroke="#6b7686"></rect><rect x="6" y="2" width="7" height="5" fill="#3f6ee6"></rect><rect x="1" y="1" width="3" height="4" fill="#48b84a"></rect><path d="M9.500 9v3M3 13.500h11" stroke="#c89a2a" stroke-width="1.600"></path><rect x="7.500" y="11.500" width="4" height="4" fill="#e8c040" stroke="#9a7a20" stroke-width=".6"></rect></svg><div class="t" style="top: 650px; letter-spacing: -0.36px; left: 893px;">Клиент для сетей Microsoft</div>
<div class="chk2" style="left:858px;top:669px;width:10px;height:10px"></div><svg class="a" style="left:859px;top:670px" width="8" height="8" viewBox="0 0 8 8"><path d="M.7 3.500l2.300 2.500L7.300 .8" fill="none" stroke="#111" stroke-width="1.700"></path></svg><svg class="a" style="left:875px;top:665px" width="16" height="17" viewBox="0 0 16 17"><rect x="3.500" y=".5" width="11" height="9" rx="1" fill="#e3e7ee" stroke="#5d6878"></rect><rect x="5" y="2" width="8" height="6" fill="#3f6ee6"></rect><path d="M2 11h13l1 3.500H1z" fill="#cfd5de" stroke="#5d6878" stroke-width=".8"></path><rect x="0" y="12.500" width="6" height="4.500" fill="#2b4fc8"></rect></svg><div class="t" style="top: 667px; letter-spacing: -0.25px; left: 893px;">Планировщик пакетов QoS</div>
<div class="chk2" style="left:858px;top:686px;width:10px;height:10px"></div><svg class="a" style="left:859px;top:687px" width="8" height="8" viewBox="0 0 8 8"><path d="M.7 3.500l2.300 2.500L7.300 .8" fill="none" stroke="#111" stroke-width="1.700"></path></svg><svg class="a" style="left:875px;top:682px" width="16" height="17" viewBox="0 0 16 17"><rect x="3.500" y=".5" width="11" height="9" rx="1" fill="#e3e7ee" stroke="#5d6878"></rect><rect x="5" y="2" width="8" height="6" fill="#3f6ee6"></rect><path d="M2 11h13l1 3.500H1z" fill="#cfd5de" stroke="#5d6878" stroke-width=".8"></path><rect x="0" y="12.500" width="6" height="4.500" fill="#2b4fc8"></rect></svg><div class="t" style="top: 684px; letter-spacing: -0.32px; left: 893px;">Служба доступа к файлам и принтерам сетей Micro...</div>
<div class="chk2" style="left:858px;top:703px;width:10px;height:10px"></div><svg class="a" style="left:859px;top:704px" width="8" height="8" viewBox="0 0 8 8"><path d="M.7 3.500l2.300 2.500L7.300 .8" fill="none" stroke="#111" stroke-width="1.700"></path></svg><svg class="a" style="left:877px;top:704px" width="14" height="8" viewBox="0 0 14 8"><path d="M0 6.500h14" stroke="#7a8088" stroke-width="1.200"></path><path d="M7 0l2.500 4h-5z" fill="#d8a020"></path><rect x="6.300" y="3.500" width="1.400" height="3" fill="#7a8088"></rect></svg><div class="t" style="top: 701px; letter-spacing: -0.24px; left: 893px;">Протокол Интернета версии 6 (TCP/IPv6)</div>
<div class="chk2" style="left:858px;top:720px;width:10px;height:10px"></div><svg class="a" style="left:859px;top:721px" width="8" height="8" viewBox="0 0 8 8"><path d="M.7 3.500l2.300 2.500L7.300 .8" fill="none" stroke="#111" stroke-width="1.700"></path></svg><svg class="a" style="left:877px;top:721px" width="14" height="8" viewBox="0 0 14 8"><path d="M0 6.500h14" stroke="#7a8088" stroke-width="1.200"></path><path d="M7 0l2.500 4h-5z" fill="#3a78d8"></path><rect x="6.300" y="3.500" width="1.400" height="3" fill="#7a8088"></rect></svg><div class="t" style="top: 718px; letter-spacing: -0.24px; left: 893px;">Протокол Интернета версии 4 (TCP/IPv4)</div>
<div class="chk2" style="left:858px;top:737px;width:10px;height:10px"></div><svg class="a" style="left:859px;top:738px" width="8" height="8" viewBox="0 0 8 8"><path d="M.7 3.500l2.300 2.500L7.300 .8" fill="none" stroke="#111" stroke-width="1.700"></path></svg><svg class="a" style="left:877px;top:738px" width="14" height="8" viewBox="0 0 14 8"><path d="M0 6.500h14" stroke="#7a8088" stroke-width="1.200"></path><path d="M7 0l2.500 4h-5z" fill="#d8a020"></path><rect x="6.300" y="3.500" width="1.400" height="3" fill="#7a8088"></rect></svg><div class="t" style="top: 735px; letter-spacing: -0.15px; left: 893px;">Драйвер в/в тополога канального уровня</div>
<div class="chk2" style="left:858px;top:754px;width:10px;height:10px"></div><svg class="a" style="left:859px;top:755px" width="8" height="8" viewBox="0 0 8 8"><path d="M.7 3.500l2.300 2.500L7.300 .8" fill="none" stroke="#111" stroke-width="1.700"></path></svg><svg class="a" style="left:877px;top:755px" width="14" height="8" viewBox="0 0 14 8"><path d="M0 6.500h14" stroke="#7a8088" stroke-width="1.200"></path><path d="M7 0l2.500 4h-5z" fill="#d8a020"></path><rect x="6.300" y="3.500" width="1.400" height="3" fill="#7a8088"></rect></svg><div class="t" style="top: 752px; letter-spacing: -0.27px; left: 893px;">Ответчик обнаружения топологии канального уровня</div>

<div class="btn" style="left:851px;top:794px;width:99px;height:21px"></div>
<div class="btn dis" style="left:960px;top:794px;width:99px;height:21px"></div>
<div class="btn" style="left:1069px;top:794px;width:100px;height:21px"></div>
<div class="t" style="top: 798px; letter-spacing: -0.07px; left: 866px;">Установить...</div>
<div class="t" style="color: rgb(131, 131, 131); top: 798px; letter-spacing: -0.42px; left: 989px;">Удалить</div>
<div class="t" style="top: 798px; letter-spacing: -0.31px; left: 1095px;">Свойства</div>
<div class="grp" style="left:850px;top:826px;width:320px;height:71px"></div>
<div class="a" style="left:857px;top:820px;width:54px;height:14px;background:#fff"></div>
<div class="t" style="top: 820px; letter-spacing: -0.49px; left: 859.5px;">Описание</div>
<div class="t" style="top: 839px; letter-spacing: -0.23px; left: 863px;">Протокол TCP/IP - стандартный протокол глобальных</div>
<div class="t" style="top: 851px; letter-spacing: -0.24px; left: 863px;">сетей, обеспечивающий связь между различными</div>
<div class="t" style="top: 864px; letter-spacing: -0.2px; left: 863px;">взаимодействующими сетями.</div>
<div class="btn" style="left:1029px;top:917px;width:73px;height:21px"></div>
<div class="btn" style="left:1110px;top:917px;width:73px;height:21px"></div>
<div class="t" style="top: 921px; letter-spacing: -0.81px; left: 1057.5px;">OK</div>
<div class="t" style="top: 921px; letter-spacing: -0.38px; left: 1126.5px;">Отмена</div>
<!-- ===== WIN2 ipv4 ===== -->
<div class="win g1" style="left:371px;top:378px;width:414px;height:461px"></div>
<div class="cap" style="left:703px;top:379px;width:29px;border-radius:0 0 0 5px;height:19px"><svg width="10" height="14" viewBox="0 0 10 14"><text x="5" y="12" text-anchor="middle" font-family="Liberation Sans" font-weight="bold" font-size="14" fill="#fbfcfe" stroke="#3f4958" stroke-width="1.600" paint-order="stroke">?</text></svg></div>
<div class="cap" style="left:731px;top:379px;width:47px;border-radius:0 0 5px 0;height:19px"><svg width="13" height="11" viewBox="0 0 13 11"><path d="M1 1h4L6.500 3 8 1h4L8.600 5.500 12 10H8L6.500 8 5 10H1l3.400-4.500z" fill="#f9fbfe" stroke="#46505f" stroke-width="1.100" stroke-linejoin="round"></path></svg></div>
<div class="s" style="text-shadow: rgb(255, 255, 255) 0px 0px 7px, rgb(255, 255, 255) 0px 0px 7px, rgb(255, 255, 255) 0px 0px 4px; top: 386px; letter-spacing: -0.1px; left: 379px;">Свойства: Протокол Интернета версии 4 (TCP/IPv4)</div>
<div class="cl" style="left:378px;top:407px;width:400px;height:425px"></div>
<div class="panel" style="left:385px;top:435px;width:384px;height:359px"></div>
<div class="tab" style="left:385px;top:415px;width:51px;height:21px"></div>
<div class="t" style="top: 418px; letter-spacing: -0.77px; left: 392.5px;">Общие</div>
<div class="t" style="top: 448px; letter-spacing: -0.22px; left: 399px;">Параметры IP могут назначаться автоматически, если сеть</div>
<div class="t" style="top: 461px; letter-spacing: -0.23px; left: 399px;">поддерживает эту возможность. В противном случае параметры</div>
<div class="t" style="top: 474px; letter-spacing: -0.18px; left: 399px;">IP можно получить у сетевого администратора.</div>
<div class="grp" style="left:400px;top:537px;width:357px;height:94px"></div>
<div class="a" style="left:406px;top:530px;width:208px;height:15px;background:#fff"></div>
<div class="radio" style="left:409px;top:511px"></div>
<div class="t" style="top: 509px; letter-spacing: -0.22px; left: 424.5px;">Получить IP-адрес автоматически</div>
<div class="radio on" style="left:409px;top:532px"></div>
<div class="t" style="top: 530px; letter-spacing: -0.25px; left: 424.5px;">Использовать следующий IP-адрес:</div>
<div class="t" style="top: 554px; letter-spacing: -0.23px; left: 412.5px;">IP-адрес:</div>
<div class="t" style="top: 580px; letter-spacing: -0.18px; left: 412.5px;">Маска подсети:</div>
<div class="t" style="top: 606px; letter-spacing: -0.35px; left: 412.5px;">Основной шлюз:</div>
<div class="ip" style="left:587px;top:551px"></div>
<div class="ip" style="left:587px;top:577px"></div>
<div class="ip" style="left:587px;top:603px"></div>
<div class="ip" style="left:587px;top:686px"></div>
<div class="ip" style="left:587px;top:712px"></div>
<div class="grp" style="left:400px;top:672px;width:357px;height:68px"></div>
<div class="a" style="left:406px;top:666px;width:275px;height:15px;background:#fff"></div>
<div class="radio dis" style="left:409px;top:645px"></div>
<div class="t" style="color: rgb(109, 109, 109); top: 643px; letter-spacing: -0.33px; left: 424.5px;">Получить адрес DNS-сервера автоматически</div>
<div class="radio on" style="left:409px;top:667px"></div>
<div class="t" style="top: 665px; letter-spacing: -0.33px; left: 424.5px;">Использовать следующие адреса DNS-серверов:</div>
<div class="t" style="top: 689px; letter-spacing: -0.41px; left: 412.5px;">Предпочитаемый DNS-сервер:</div>
<div class="t" style="top: 715px; letter-spacing: -0.29px; left: 412.5px;">Альтернативный DNS-сервер:</div>
<div class="chk" style="left:413px;top:758px;width:12px;height:12px"></div>
<div class="t" style="top: 757px; letter-spacing: -0.19px; left: 428px;">Подтвердить параметры при выходе</div>
<div class="btn" style="left:648px;top:758px;width:108px;height:21px"></div>
<div class="t" style="top: 762px; letter-spacing: -0.15px; left: 657px;">Дополнительно...</div>
<div class="btn" style="left:616px;top:802px;width:73px;height:21px"></div>
<div class="btn" style="left:697px;top:802px;width:73px;height:21px"></div>
<div class="t" style="top: 806px; letter-spacing: -0.81px; left: 644px;">OK</div>
<div class="t" style="top: 806px; letter-spacing: -0.54px; left: 713.5px;">Отмена</div>
<div class="t" style="top: 554px; left: 596.5px;">192</div><div class="t" style="top: 554px; left: 625.5px;">168</div><div class="t" style="top: 554px; left: 662px;">1</div><div class="t" style="top: 554px; left: 688.5px;">10</div><div class="t" style="top: 554px; left: 619px;">.</div><div class="t" style="top: 554px; left: 649.5px;">.</div><div class="t" style="top: 554px; left: 679px;">.</div>
<div class="t" style="top: 580px; left: 596.5px;">255</div><div class="t" style="top: 580px; left: 625.5px;">255</div><div class="t" style="top: 580px; left: 655.5px;">255</div><div class="t" style="top: 580px; left: 692px;">0</div><div class="t" style="top: 580px; left: 619px;">.</div><div class="t" style="top: 580px; left: 649.5px;">.</div><div class="t" style="top: 580px; left: 679px;">.</div>
<div class="t" style="top: 606px; left: 596.5px;">192</div><div class="t" style="top: 606px; left: 625.5px;">168</div><div class="t" style="top: 606px; left: 662px;">1</div><div class="t" style="top: 606px; left: 692px;">1</div><div class="t" style="top: 606px; left: 619px;">.</div><div class="t" style="top: 606px; left: 649.5px;">.</div><div class="t" style="top: 606px; left: 679px;">.</div>
<div class="t" style="top: 689px; left: 596.5px;">178</div><div class="t" style="top: 689px; left: 628.5px;">35</div><div class="t" style="top: 689px; left: 655.5px;">148</div><div class="t" style="top: 689px; left: 685.5px;">197</div><div class="t" style="top: 689px; left: 619px;">.</div><div class="t" style="top: 689px; left: 649.5px;">.</div><div class="t" style="top: 689px; left: 679px;">.</div>
<div class="t" style="top: 715px; left: 596.5px;">178</div><div class="t" style="top: 715px; left: 628.5px;">35</div><div class="t" style="top: 715px; left: 655.5px;">148</div><div class="t" style="top: 715px; left: 685.5px;">198</div><div class="t" style="top: 715px; left: 619px;">.</div><div class="t" style="top: 715px; left: 649.5px;">.</div><div class="t" style="top: 715px; left: 679px;">.</div>

<!-- ===== TASKBAR ===== -->
<div id="task"></div>
<div class="a" style="left:158px;top:985px;width:654px;height:38px;background:linear-gradient(90deg,rgba(142,165,222,0) 0,#8ea5de 26px,#8ea5de 636px,rgba(142,165,222,0) 654px)"></div>
<!-- start orb -->
<svg class="a" style="left:7px;top:984px" width="41" height="39" viewBox="0 0 41 39"><defs><radialGradient id="ob" cx=".5" cy="1" r="1"><stop offset="0" stop-color="#22d4f6"></stop><stop offset=".3" stop-color="#1487cc"></stop><stop offset=".62" stop-color="#184c90"></stop><stop offset="1" stop-color="#2f6aa8"></stop></radialGradient><linearGradient id="og" x1="0" y1="0" x2="0" y2="1"><stop offset="0" stop-color="#fff" stop-opacity=".75"></stop><stop offset="1" stop-color="#fff" stop-opacity=".12"></stop></linearGradient></defs>
<circle cx="20.300" cy="19.800" r="18.300" fill="url(#ob)" stroke="#9fc0e4" stroke-width="1"></circle><circle cx="20.300" cy="19.800" r="19.300" fill="none" stroke="#1c2f5c" stroke-opacity=".6" stroke-width="1"></circle>
<path d="M3 17A17.500 17.500 0 0 1 37.600 17C30 21 11 21 3 17z" fill="url(#og)"></path>
<path d="M12.500 8.500c2.600-1.200 5-1.200 7.500 0l-1.700 8.200c-2.500-1.100-5-1.100-7.600 0z" fill="#ee5a22"></path><path d="M22 9c2.600 1.300 5.200 1.300 7.800 0l-1.800 8.200c-2.500 1.200-5.100 1.200-7.700 0z" fill="#86c440"></path><path d="M10.300 18.700c2.600-1.100 5-1.100 7.600 0l-1.700 8.300c-2.600-1.200-5.100-1.200-7.700 0z" fill="#3b9be8"></path><path d="M19.800 19.200c2.600 1.200 5.200 1.200 7.700 0l-1.700 8.300c-2.600 1.200-5.200 1.200-7.800 0z" fill="#fac12e"></path></svg>
<!-- IE -->
<svg class="a" style="left:72px;top:986px" width="36" height="36" viewBox="0 0 36 36"><defs><linearGradient id="ie" x1="0" y1="0" x2="0" y2="1"><stop offset="0" stop-color="#1a5cb8"></stop><stop offset=".55" stop-color="#1c86de"></stop><stop offset="1" stop-color="#35c2f4"></stop></linearGradient></defs>
<path d="M18.500 5.500c6.500 0 11.500 5.200 11.500 12 0 .8 0 1.500-.1 2.200H14.500c.3 3 2.300 4.800 4.800 4.800 1.900 0 3.300-.9 4.100-2.400h5.700c-1.400 4.700-5.500 7.400-10.300 7.400C12 29.500 7 24.300 7 17.500S12 5.500 18.500 5.500zm-4 9.800h9.200c-.4-2.700-2.100-4.400-4.600-4.400s-4.100 1.700-4.600 4.400z" fill="url(#ie)" stroke="#123c7c" stroke-width=".6"></path>
<path d="M5.500 30.500C-.5 24 12 7.500 26.500 3.200c4.800-1.200 7.600.5 6 5.300" fill="none" stroke="#f5b616" stroke-width="2.300" stroke-linecap="round"></path><path d="M5.500 30.500c1.800 1.700 6.500.8 11-2" fill="none" stroke="#f5b616" stroke-width="1.800" stroke-linecap="round"></path></svg>
<!-- buttons -->
<div class="tb" style="left:122px;width:59px;background:radial-gradient(ellipse at 20% 0%,rgba(255,255,255,.55),rgba(255,255,255,.28) 60%,rgba(255,255,255,.2))"></div>
<div class="tb" style="left:184px;width:59px"></div>
<div class="tb" style="left:308px;width:59px"></div>
<div class="tb" style="left:369px;width:59px"></div>
<div class="tb" style="left:431px;width:59px"></div><div class="a" style="left:432px;top:986px;width:51px;height:37px;background:linear-gradient(135deg,#4c8f55 0,#4ea655 30%,#3fc845 60%,#2ee22e 100%);box-shadow:0 0 0 1px #7df07d inset"></div>
<div class="tb" style="left:493px;width:59px;border-radius:3px"></div><div class="tb" style="left:493px;width:56px"></div><div class="tb" style="left:493px;width:52px;background:linear-gradient(rgba(255,255,255,.38),rgba(255,255,255,.2) 45%,rgba(255,255,255,.1) 50%,rgba(255,255,255,.22)),#8ea5de"></div>
<!-- explorer icon -->
<svg class="a" style="left:134px;top:990px" width="34" height="30" viewBox="0 0 34 30"><defs><linearGradient id="fo" x1="0" y1="0" x2="0" y2="1"><stop offset="0" stop-color="#fbf0b8"></stop><stop offset="1" stop-color="#f0d068"></stop></linearGradient><linearGradient id="fh" x1="0" y1="0" x2="0" y2="1"><stop offset="0" stop-color="#d8f0fb"></stop><stop offset="1" stop-color="#58b8e6"></stop></linearGradient></defs>
<path d="M3 3h9l2 2.500h17V27H3z" fill="#f3da80" stroke="#c9a748" stroke-width=".8"></path><rect x="4.500" y="1.500" width="9" height="3" fill="#fff" stroke="#d8c890" stroke-width=".5"></rect><rect x="5" y="1.800" width="3.500" height="2" fill="#22b14c"></rect>
<rect x="11.500" y="3.500" width="9" height="3" fill="#fff" stroke="#d8c890" stroke-width=".5"></rect><rect x="12" y="3.800" width="3.500" height="2" fill="#e03030"></rect>
<path d="M1.500 6.500h16l2-2.500h12.500v24H1.500z" fill="url(#fo)" stroke="#c9a748" stroke-width=".8"></path><rect x="19.500" y="5.500" width="9" height="3" fill="#fff" stroke="#d8c890" stroke-width=".5"></rect><rect x="20" y="5.800" width="3.500" height="2" fill="#2a8ae0"></rect>
<path d="M5 17.500h23.500V29.500h-6.500v-6.500h-10v6.500H5z" fill="url(#fh)" stroke="#4aa0d0" stroke-width=".8" fill-opacity=".92"></path><path d="M7 14l1 3.500 3.500 1-3.500 1-1 3.500-1-3.500-3.500-1 3.500-1z" fill="#fff" fill-opacity=".9"></path></svg>
<!-- steam -->
<svg class="a" style="left:198px;top:988px" width="31" height="31" viewBox="0 0 31 31"><defs><linearGradient id="stm" x1="0" y1="0" x2="0" y2="1"><stop offset="0" stop-color="#0c1c48"></stop><stop offset=".5" stop-color="#14305e"></stop><stop offset="1" stop-color="#2a78a8"></stop></linearGradient></defs><circle cx="15.500" cy="15.500" r="14.800" fill="url(#stm)"></circle><circle cx="19.800" cy="11.800" r="4.600" fill="none" stroke="#fff" stroke-width="2.300"></circle><circle cx="19.800" cy="11.800" r="2.300" fill="#c9d4e6" fill-opacity=".55"></circle><path d="M.8 14.500l9 4 6-6.500 4 4.500-6.500 5.500" fill="#fff"></path><circle cx="10.500" cy="21.300" r="3.400" fill="#fff"></circle><circle cx="10.500" cy="21.300" r="2" fill="none" stroke="#1c3a66" stroke-width=".8"></circle></svg>
<!-- wmp -->
<svg class="a" style="left:260px;top:992px" width="28" height="26" viewBox="0 0 28 26"><rect x="5" y="2.500" width="21.500" height="20" fill="#c0dff2" stroke="#8fbcd8" stroke-width=".7"></rect><rect x="3" y="1.800" width="21.500" height="21" fill="#b4d8ee" stroke="#8fbcd8" stroke-width=".7"></rect><rect x="1" y="1" width="21.500" height="22.500" fill="#a6d0ec" stroke="#86b4d4" stroke-width=".7"></rect><circle cx="11.600" cy="12.800" r="9" fill="#f07c12"></circle><circle cx="11.600" cy="12.800" r="7.600" fill="#f89a30"></circle><path d="M8.800 7.500v10.600l9-5.300z" fill="#fff"></path></svg>
<!-- yandex -->
<svg class="a" style="left:321px;top:988px" width="32" height="32" viewBox="0 0 32 32"><defs><linearGradient id="ya" x1="0" y1="0" x2="0" y2="1"><stop offset="0" stop-color="#fff"></stop><stop offset=".7" stop-color="#f4f4f4"></stop><stop offset="1" stop-color="#d4d4d4"></stop></linearGradient></defs><circle cx="16" cy="16.200" r="15.200" fill="url(#ya)"></circle><path d="M8 9l7.600 8.500L23.600 9M15.600 17.500V26" fill="none" stroke="#e0181c" stroke-width="3.400" stroke-linecap="round" stroke-linejoin="round"></path></svg>
<!-- purple game -->
<svg class="a" style="left:383px;top:988px" width="32" height="32" viewBox="0 0 32 32"><defs><linearGradient id="sk" x1="1" y1="0" x2="0" y2="1"><stop offset="0" stop-color="#7a1fd0" stop-opacity=".2"></stop><stop offset=".6" stop-color="#d050f0"></stop><stop offset="1" stop-color="#fff"></stop></linearGradient><radialGradient id="bu"><stop offset="0" stop-color="#fff"></stop><stop offset=".4" stop-color="#7fe0ff"></stop><stop offset="1" stop-color="#2a60e0" stop-opacity="0"></stop></radialGradient></defs><rect width="32" height="32" fill="#07030f"></rect>
<path d="M31 0L5 9M32 4L6 25M32 12L21 23M26 0L8 8" stroke="url(#sk)" stroke-width="2.600" stroke-linecap="round"></path><path d="M30 2L5 24M31 7L20 22" stroke="#fff" stroke-width=".9" stroke-opacity=".8"></path>
<circle cx="5" cy="9" r="4.500" fill="url(#bu)"></circle><circle cx="5.500" cy="25" r="5.500" fill="url(#bu)"></circle><circle cx="20.500" cy="23" r="4.500" fill="url(#bu)"></circle><path d="M9 22l10-7" stroke="#f0a0ff" stroke-width="2.200" stroke-dasharray="1.500 1"></path></svg>
<!-- green bowtie -->
<svg class="a" style="left:444px;top:990px" width="34" height="30" viewBox="0 0 34 30"><defs><linearGradient id="bt1" x1="0" y1="0" x2="1" y2="1"><stop offset="0" stop-color="#e6def4"></stop><stop offset=".35" stop-color="#7a55c0"></stop><stop offset="1" stop-color="#3b1f90"></stop></linearGradient><linearGradient id="bt2" x1="0" y1="0" x2="1" y2="1"><stop offset="0" stop-color="#fff"></stop><stop offset=".6" stop-color="#e4dcf0"></stop><stop offset="1" stop-color="#a48fd0"></stop></linearGradient></defs><path d="M33 1L13 15l20 14z" fill="url(#bt2)" stroke="#7e68b0" stroke-width=".8"></path><path d="M1 1l22 14L1 29z" fill="url(#bt1)" stroke="#e8e0f6" stroke-width=".8"></path></svg>
<!-- control panel -->
<svg class="a" style="left:502px;top:991px" width="34" height="30" viewBox="0 0 34 30"><defs><linearGradient id="cp" x1="0" y1="0" x2="0" y2="1"><stop offset="0" stop-color="#4a9ee0"></stop><stop offset="1" stop-color="#2a6cb4"></stop></linearGradient><radialGradient id="ms" cx=".4" cy=".3"><stop offset="0" stop-color="#fafafa"></stop><stop offset="1" stop-color="#9a9a9a"></stop></radialGradient></defs>
<rect x="1" y="1.400" width="31.400" height="21.200" rx="1.500" fill="url(#cp)" stroke="#a9d2f2" stroke-width="1"></rect>
<circle cx="9" cy="9" r="4.300" fill="none" stroke="#e8f4fc" stroke-width="1.300"></circle><path d="M9 9V3.500A5.500 5.500 0 0 1 14.500 9z" fill="#f6a21e"></path>
<rect x="17.500" y="6.200" width="11" height="3" fill="#1c5aa8" stroke="#e8f4fc" stroke-width=".8"></rect><rect x="17.500" y="12.400" width="11" height="3" fill="#1c5aa8" stroke="#e8f4fc" stroke-width=".8"></rect><rect x="18" y="6.600" width="5" height="2.200" fill="#48c0f0"></rect><rect x="18" y="12.800" width="5" height="2.200" fill="#48c0f0"></rect>
<circle cx="7.400" cy="17.400" r="1" fill="#6ad8f8"></circle><circle cx="11" cy="17.400" r="1.200" fill="#f6a21e"></circle>
<ellipse cx="17.400" cy="24" rx="6.600" ry="4.600" fill="url(#ms)" stroke="#8a8a8a" stroke-width=".5"></ellipse></svg>
<!-- tray -->
<div class="s" style="color: rgb(255, 255, 255); font-size: 12.5px; top: 995px; letter-spacing: -1.03px; left: 991.5px;">RU</div>
<svg class="a" style="left:1022px;top:998px" width="17" height="15" viewBox="0 0 17 15"><rect x=".5" y=".5" width="16" height="14" fill="#1f62b8" stroke="#0a1020"></rect><text x="8.500" y="11" font-size="8" font-weight="bold" fill="#fff" text-anchor="middle" font-family="Liberation Sans">FFA</text></svg>
<div class="a" style="left:1046px;top:997px;width:16px;height:16px;border-radius:50%;background:linear-gradient(#1a3570,#143058 50%,#2a78b0)"></div>
<svg class="a" style="left:1046px;top:997px" width="16" height="16" viewBox="0 0 16 16"><circle cx="10.500" cy="6" r="2.300" fill="none" stroke="#fff" stroke-width="1.300"></circle><path d="M1 9l4.500 2 3.500-3.500" fill="none" stroke="#fff" stroke-width="1.800"></path></svg>
<svg class="a" style="left:1071px;top:996px" width="17" height="18" viewBox="0 0 17 18"><rect x="2" y="0" width="7" height="5" fill="#d0d0d0" stroke="#666"></rect><rect x="1" y="5" width="9" height="11" fill="#9a9a9a" stroke="#555"></rect><circle cx="11.500" cy="12.500" r="4.500" fill="#2eb135" stroke="#1c7a22"></circle><path d="M9.300 12.500l1.700 1.700 3-3.200" fill="none" stroke="#fff" stroke-width="1.300"></path></svg>
<svg class="a" style="left:1094px;top:997px" width="17" height="17" viewBox="0 0 17 17"><path d="M2.500 0v17" stroke="#fff" stroke-width="2"></path><path d="M4 1.500c3-1.500 5 1.500 9 0v7c-4 1.500-6-1.500-9 0z" fill="#fff"></path></svg>
<svg class="a" style="left:1118px;top:997px" width="17" height="17" viewBox="0 0 17 17"><rect x="4.500" y="3.500" width="11" height="8" fill="#2a3f6a" stroke="#fff" stroke-width="1.400"></rect><path d="M7 15h6M10 12v3" stroke="#fff" stroke-width="1.400"></path><path d="M2 0v9M0 2.500h4" stroke="#fff" stroke-width="1.400"></path></svg>
<svg class="a" style="left:1141px;top:996px" width="18" height="18" viewBox="0 0 18 18"><path d="M1 6h4l5-4.500v15L5 12H1z" fill="#e34a2a" stroke="#f8d0c0" stroke-width=".8"></path><path d="M12.500 5.500c1.500 2 1.500 5 0 7M15 3.500c2.500 3.500 2.500 7.500 0 11" fill="none" stroke="#e0705a" stroke-width="1.200"></path></svg>
<svg class="a" style="left:1166px;top:996px" width="18" height="18" viewBox="0 0 18 18"><path d="M1 6h4l5-4.500v15L5 12H1z" fill="#fff"></path><path d="M12.500 5.500c1.500 2 1.500 5 0 7M15 3.500c2.500 3.500 2.500 7.500 0 11" fill="none" stroke="#fff" stroke-width="1.200"></path></svg>
<div class="s" style="color: rgb(255, 255, 255); top: 990px; letter-spacing: -0.61px; left: 1213.5px;">21:01</div>
<div class="s" style="color: rgb(255, 255, 255); top: 1007px; letter-spacing: -0.61px; left: 1199.5px;">19.02.2016</div>
<div class="a" style="left:1267px;top:984px;width:12px;height:39px;border-left:1px solid rgba(20,30,60,.7);background:linear-gradient(rgba(255,255,255,.35),rgba(255,255,255,.08) 50%,rgba(255,255,255,.18));box-shadow:1px 0 0 rgba(255,255,255,.4) inset"></div>

</body></html>
